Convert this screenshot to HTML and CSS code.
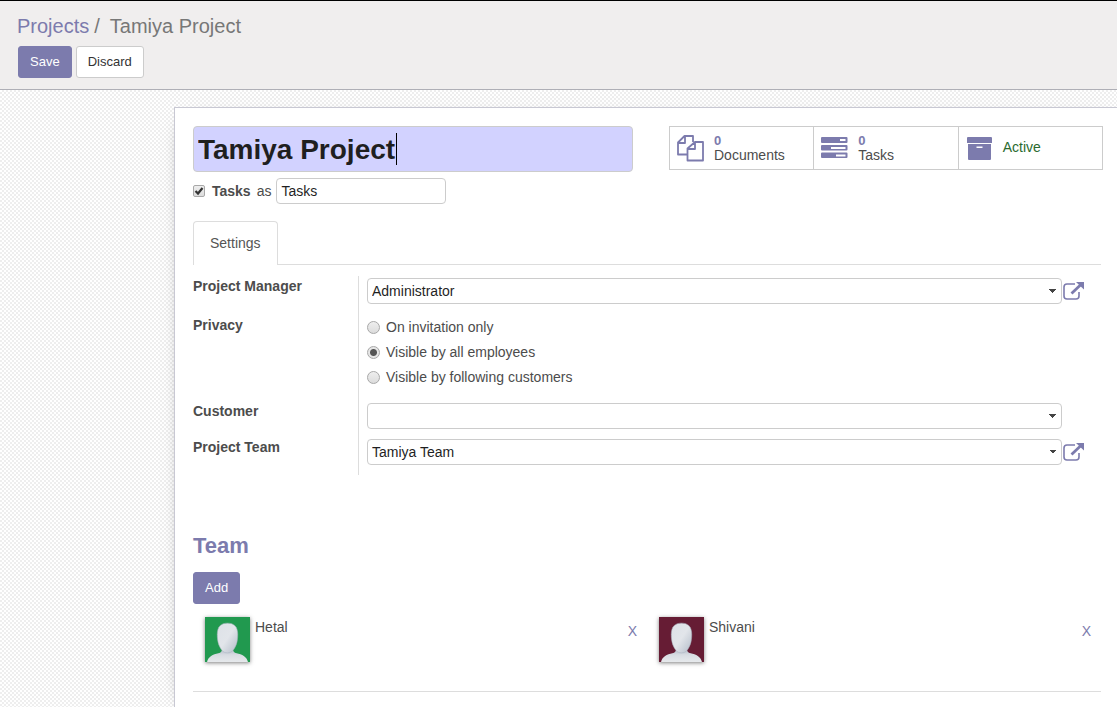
FILE: index.html
```html
<!DOCTYPE html>
<html lang="en">
<head>
<meta charset="utf-8">
<title>Tamiya Project</title>
<link rel="stylesheet" href="styles.css">
</head>
<body>
<svg class="defs" width="0" height="0" aria-hidden="true">
  <defs>
    <linearGradient id="skin" x1="0" y1="0" x2="1" y2="1">
      <stop offset="0" stop-color="#dde1e7"/>
      <stop offset="0.5" stop-color="#e2e5ea"/>
      <stop offset="1" stop-color="#b3bcc9"/>
    </linearGradient>
    <linearGradient id="torso" x1="0" y1="0" x2="0" y2="1">
      <stop offset="0" stop-color="#a9b3c2"/>
      <stop offset="0.5" stop-color="#d8dce2"/>
      <stop offset="1" stop-color="#e6e9ec"/>
    </linearGradient>
    <symbol id="person" viewBox="0 0 44 44">
      <path fill="url(#torso)" d="M2 44C3 39 8 36.500 13 35.500Q17 34.500 17 30H27Q27 34.500 31 35.500C36 36.500 41 39 42 44Z"/>
      <path fill="url(#skin)" stroke="#a9b2c0" stroke-width=".5" d="M22 6C28 6 32 9 32 17C32 25 30 29 27.500 32.500C25 36 19 36 16.500 32.500C14 29 12 25 12 17C12 9 16 6 22 6Z"/>
    </symbol>
    <symbol id="external" viewBox="0 0 22 20">
      <path fill="none" stroke="currentColor" stroke-width="1.600" d="M12 3H4Q1 3 1 6V15Q1 18 4 18H13Q16 18 16 15V11"/>
      <path fill="none" stroke="currentColor" stroke-width="2.800" d="M8.500 12.500L18 3.500"/>
      <path fill="currentColor" d="M13 1H21V8.500Z"/>
    </symbol>
  </defs>
</svg>

<header class="control-panel">
  <nav class="breadcrumb"><a href="#">Projects</a><span>/</span><span class="current">Tamiya Project</span></nav>
  <div class="actions">
    <button class="btn btn-primary" type="button">Save</button>
    <button class="btn btn-default" type="button">Discard</button>
  </div>
</header>

<main class="form-view">
  <section class="sheet">
    <div class="sheet-top">
      <div class="title-field">
        <input class="title-input" type="text" value="Tamiya Project" aria-label="Project name">
        <span class="caret"><span class="caret-text">Tamiya Project</span></span>
      </div>
      <div class="stats">
        <button class="stat" type="button">
          <svg class="stat-icon" viewBox="0 0 28 28" fill="none" stroke="currentColor" stroke-width="1.800" stroke-linejoin="round"><path d="M11 20.500H2V8.500L8.500 2H17V8M9 2V9H2M19 8H27V26.500H11.500V14.500ZM19 8V15H11.500"/></svg>
          <span class="stat-text"><b>0</b><span>Documents</span></span>
        </button>
        <button class="stat" type="button">
          <svg class="stat-icon" viewBox="0 0 28 28"><path fill="currentColor" fill-rule="evenodd" d="M2 3H26.500Q27.500 3 27.500 4V8Q27.500 9 26.500 9H2Q1 9 1 8V4Q1 3 2 3ZM20 5V7H25.500V5ZM2 11H26.500Q27.500 11 27.500 12V15.500Q27.500 16.500 26.500 16.500H2Q1 16.500 1 15.500V12Q1 11 2 11ZM11 13V15H25.500V13ZM2 18.500H26.500Q27.500 18.500 27.500 19.500V23Q27.500 24 26.500 24H2Q1 24 1 23V19.500Q1 18.500 2 18.500ZM16 20.500V22.500H25.500V20.500Z"/></svg>
          <span class="stat-text"><b>0</b><span>Tasks</span></span>
        </button>
        <button class="stat" type="button">
          <svg class="stat-icon" viewBox="0 0 28 28"><path fill="currentColor" fill-rule="evenodd" d="M3 3H26Q27 3 27 4V9H2V4Q2 3 3 3ZM3 10H26V25Q26 26 25 26H4Q3 26 3 25ZM11.500 12.500V14H17.500V12.500Z"/></svg>
          <span class="stat-text active">Active</span>
        </button>
      </div>
    </div>

    <div class="alias">
      <input class="check" type="checkbox" id="use-tasks" checked>
      <label class="strong" for="use-tasks">Tasks</label>
      <label for="task-label">as</label>
      <input class="field alias-input" id="task-label" type="text" value="Tasks">
    </div>

    <div class="tabs" role="tablist"><button class="tab" type="button" role="tab" aria-selected="true">Settings</button></div>

    <div class="settings">
      <div class="row row-manager">
        <label class="row-label" for="manager">Project Manager</label>
        <div class="row-value">
          <select class="field select" id="manager"><option>Administrator</option></select>
          <a class="open" href="#" aria-label="Open project manager"><svg width="22" height="20"><use href="#external"/></svg></a>
        </div>
      </div>
      <div class="row row-privacy" role="radiogroup" aria-labelledby="privacy">
        <span class="row-label" id="privacy">Privacy</span>
        <div class="row-value radios">
          <label><input class="radio" type="radio" name="privacy">On invitation only</label>
          <label><input class="radio" type="radio" name="privacy" checked>Visible by all employees</label>
          <label><input class="radio" type="radio" name="privacy">Visible by following customers</label>
        </div>
      </div>
      <div class="row row-customer">
        <label class="row-label" for="customer">Customer</label>
        <div class="row-value">
          <select class="field select" id="customer"><option></option></select>
          <span class="open"></span>
        </div>
      </div>
      <div class="row row-team">
        <label class="row-label" for="team">Project Team</label>
        <div class="row-value">
          <select class="field select" id="team"><option>Tamiya Team</option></select>
          <a class="open" href="#" aria-label="Open project team"><svg width="22" height="20"><use href="#external"/></svg></a>
        </div>
      </div>
    </div>

    <h2 class="team-title">Team</h2>
    <button class="btn btn-primary" type="button">Add</button>
    <div class="members">
      <article class="member">
        <svg class="avatar green" viewBox="0 0 44 44"><use href="#person"/></svg>
        <span>Hetal</span>
        <button class="remove" type="button" aria-label="Remove Hetal">X</button>
      </article>
      <article class="member">
        <svg class="avatar maroon" viewBox="0 0 44 44"><use href="#person"/></svg>
        <span>Shivani</span>
        <button class="remove" type="button" aria-label="Remove Shivani">X</button>
      </article>
    </div>
  </section>
</main>
</body>
</html>
```

FILE: styles.css
```css
* { box-sizing: border-box; }
html, body { height: 100%; }
body {
  margin: 0;
  display: flex;
  flex-direction: column;
  overflow: hidden;
  font: 14px/20px "Liberation Sans", Arial, sans-serif;
  color: #4c4c4c;
}
button, input, select { font: inherit; color: inherit; margin: 0; }
a { color: #7c7bad; text-decoration: none; }
.defs { position: absolute; }

.control-panel {
  flex: none;
  background: #f0eeee;
  border-top: 1px solid #000;
  border-bottom: 1px solid #afafb6;
  padding: 13px 17px 11px;
}
.breadcrumb {
  display: flex;
  gap: 5px;
  font-size: 20px;
  line-height: 24px;
  color: #777;
}
.current { margin-left: 5px; }
.actions { display: flex; gap: 4px; margin: 8px 0 0 1px; }
.btn {
  height: 32px;
  padding: 0 11px;
  border: 1px solid #7c7bad;
  border-radius: 3px;
  font-size: 13px;
  line-height: 20px;
}
.btn-primary { background: #7c7bad; color: #fff; }
.btn-default { background: #fff; border-color: #ccc; color: #333; }

.form-view {
  flex: 1;
  display: flex;
  padding: 17px 0 0 174px;
  background: repeating-conic-gradient(#eee 0 25%, #fff 0 50%) 0 0 / 4px 4px;
}
.sheet {
  flex: 1;
  min-width: 0;
  padding: 18px 16px 0 18px;
  background: #fff;
  border: 1px solid #c8c8d3;
  border-width: 1px 0 0 1px;
  box-shadow: 0 5px 20px -15px #000;
}
.sheet-top {
  display: flex;
  justify-content: space-between;
  align-items: flex-start;
  margin-right: -2px;
}
.title-field { position: relative; width: 440px; }
.title-input {
  display: block;
  width: 100%;
  height: 46px;
  padding: 1px 4px 0;
  border: 1px solid #ccc;
  border-radius: 4px;
  background: #d2d2ff;
  font-size: 28px;
  font-weight: bold;
  color: #1f1f1f;
}
.caret {
  position: absolute;
  left: 6px;
  top: 7px;
  height: 32px;
  border-right: 1px solid #000;
  font-size: 28px;
  font-weight: bold;
  pointer-events: none;
}
.caret-text { visibility: hidden; }
.stats { display: flex; width: 434px; border: 1px solid #ccc; }
.stat {
  flex: 1;
  display: flex;
  align-items: center;
  gap: 10px;
  height: 42px;
  padding: 0 6px;
  border: 0;
  background: #fff;
  text-align: left;
}
.stat + .stat { border-left: 1px solid #ccc; }
.stat-icon { width: 28px; height: 28px; color: #7c7bad; }
.stat-text { display: grid; line-height: 15px; }
.stat-text b { font-size: 13px; color: #7c7bad; }
.stat-text.active { padding-bottom: 2px; color: #2b6a2f; }

.alias { display: flex; align-items: center; gap: 5px; margin-top: 6px; }
.strong { font-weight: bold; margin: 0 1px 0 2px; }
.field {
  height: 26px;
  padding: 0 4px;
  border: 1px solid #ccc;
  border-radius: 4px;
  background-color: #fff;
  color: #1f1f1f;
}
.alias-input { width: 170px; }
.check, .radio {
  appearance: none;
  flex: none;
  border: 1px solid #a8a8a8;
  background: linear-gradient(#eee, #dcdcdc) center / 100% no-repeat;
}
.check {
  width: 12px;
  height: 12px;
  border-radius: 2px;
}
.check:checked {
  background-image:
    url("data:image/svg+xml,%3Csvg xmlns='http://www.w3.org/2000/svg' viewBox='0 0 10 10'%3E%3Cpath d='M1.500 5L4 7.500L8.500 2' fill='none' stroke='%23333' stroke-width='2.200'/%3E%3C/svg%3E"),
    linear-gradient(#eee, #dcdcdc);
}
.radio { width: 13px; height: 13px; border-radius: 50%; }
.radio:checked {
  background: radial-gradient(circle, #555 0 3px, #e6e6e6 4px);
}

.tabs { display: flex; margin-top: 17px; border-bottom: 1px solid #ddd; }
.tab {
  height: 44px;
  margin-bottom: -1px;
  padding: 0 16px 1px;
  border: 1px solid #ddd;
  border-bottom: 0;
  border-radius: 4px 4px 0 0;
  background: #fff;
  color: #555;
}

.settings {
  margin-top: 11px;
  background: linear-gradient(#ddd, #ddd) 165px 0 / 1px 100% no-repeat;
}
.row { display: grid; grid-template-columns: 174px minmax(0, 1fr); }
.row-label { font-weight: bold; }
.row-value { display: flex; align-items: center; gap: 1px; padding-top: 2px; }
.row-manager { height: 39px; align-items: start; }
.row-privacy { height: 86px; align-items: start; }
.row-customer { height: 36px; align-items: start; }
.row-team { height: 38px; align-items: start; }
.select {
  flex: 1;
  min-width: 0;
  appearance: none;
  background-image: linear-gradient(to bottom right, #444 50%, transparent 50%), linear-gradient(to bottom left, #444 50%, transparent 50%);
  background-size: 4px 4px;
  background-position: right 4px center, right 8px center;
  background-repeat: no-repeat;
}
.open { width: 22px; height: 20px; margin-right: 16px; }
.open svg { display: block; }
.radios { flex-direction: column; align-items: flex-start; gap: 5px; }
.radios label { display: flex; align-items: center; gap: 6px; }

.team-title {
  margin: 57px 0 12px;
  font-size: 22px;
  line-height: 28px;
  color: #7c7bad;
}
.members {
  display: grid;
  grid-template-columns: 1fr 1fr;
  padding: 13px 0 29px;
  border-bottom: 1px solid #ddd;
}
.member { display: flex; align-items: flex-start; gap: 5px; padding: 0 10px 0 12px; }
.avatar { width: 45px; height: 45px; box-shadow: 0 1px 4px rgba(0, 0, 0, .5); }
.green { background: #21994f; }
.maroon { background: #661c34; }
.remove {
  margin: 4px 0 0 auto;
  padding: 0;
  border: 0;
  background: none;
  color: #7c7bad;
  line-height: 20px;
}
```
